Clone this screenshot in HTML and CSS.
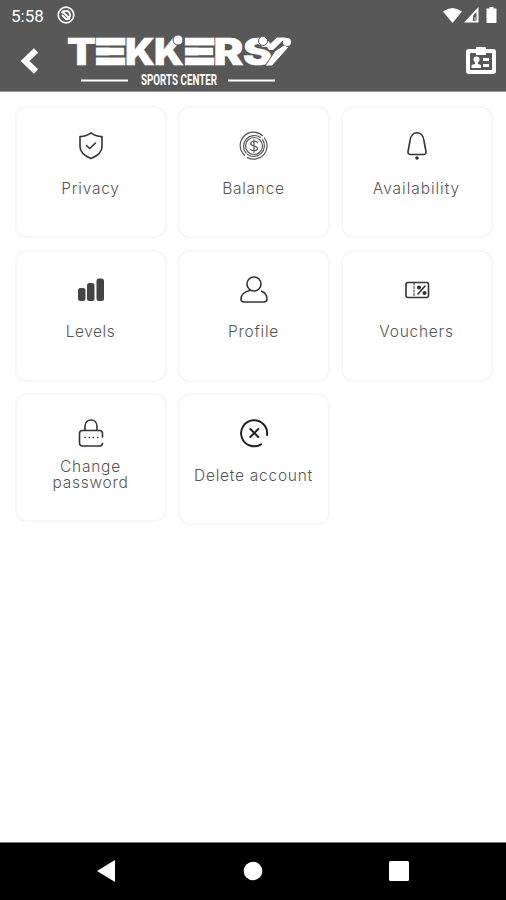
FILE: index.html
```html
<!DOCTYPE html>
<html lang="en">
<head>
<meta charset="utf-8">
<title>Tekkers Sports Center</title>
<link rel="stylesheet" href="styles.css">
</head>
<body>
<header class="top">
  <div class="status">
    <span class="time">5:58</span>
    <svg class="dnd" width="18" height="18" viewBox="0 0 18 18" fill="none" stroke="#fff"><circle cx="9" cy="9" r="7.8" stroke-width="1.7"/><path d="M4.500 7C7 4 12 4 13 8c1 3-2 6-5 5M5 5l8 8M5 9l4 4" stroke-width="1.800"/></svg>
    <svg class="signals" width="56" height="18" viewBox="0 0 56 18" fill="#fff"><path d="M0 4.500Q9.500-2.500 19 4.500L9.500 16Z"/><path d="M21 15.500 35.500 0V15.500Z"/><path d="M30 14V8.500L33.500 5V14Z" fill="#585858"/><path d="M32 10v4" stroke="#ddd" stroke-width="1"/><path d="M46.500 0h4v1.500h3V15q0 1-1 1h-8q-1 0-1-1V1.500h3Z"/></svg>
  </div>
  <div class="bar">
    <svg class="back" width="20" height="26" viewBox="0 0 20 26" fill="none" stroke="#fff" stroke-width="6"><path d="M16 2.500 5 13 16 23.500"/></svg>
    <svg class="logo" width="230" height="56" viewBox="0 0 230 56" fill="#fff">
      <g class="wordmark">
        <text x="1" y="32" textLength="29" lengthAdjust="spacingAndGlyphs">T</text>
        <text class="cut" x="29.500" y="31" textLength="30" lengthAdjust="spacingAndGlyphs">E</text>
        <text x="59" y="32" textLength="30" lengthAdjust="spacingAndGlyphs">K</text>
        <text x="88" y="32" textLength="30" lengthAdjust="spacingAndGlyphs">K</text>
        <text class="cut" x="118.500" y="31" textLength="30" lengthAdjust="spacingAndGlyphs">E</text>
        <text x="147.500" y="32" textLength="30" lengthAdjust="spacingAndGlyphs">R</text>
        <text x="177" y="32" textLength="29" lengthAdjust="spacingAndGlyphs">S</text>
      </g>
      <path d="M29 13.500h30M29 23.500h30M118 13.500h30M118 23.500h30" stroke="#585858" stroke-width="2"/>
      <circle cx="112" cy="7" r="5" stroke="#585858"/>
      <circle cx="197" cy="8" r="4.500" stroke="#585858"/>
      <path d="M201 14 211 4.500h9L207 17H203Z"/>
      <path d="M199 33 209 18 218 12 223 14 206 33Z" stroke="#585858"/>
      <circle cx="221" cy="9" r="4"/>
      <path d="M15 47.500h47M162 47.500h47" stroke="#fff" stroke-width="2"/>
      <text class="tagline" x="75" y="52" textLength="76" lengthAdjust="spacingAndGlyphs">SPORTS CENTER</text>
    </svg>
    <svg class="badge" width="30" height="28" viewBox="0 0 30 28"><path d="M10 2V1q0-1 1-1h8q1 0 1 1v1h7q3 0 3 3v19q0 3-3 3H3q-3 0-3-3V5q0-3 3-3Z" fill="#fff"/><path d="M4 6h6v2h10V6h6v17H4Z" fill="#585858"/><circle cx="10.500" cy="12.500" r="3" fill="#fff"/><path d="M9 15h3v2l3 1v3H5.500v-3L9 17ZM17 11h6v3h-6ZM17 17h6v3h-6Z" fill="#fff"/></svg>
  </div>
</header>
<main class="grid">
  <div class="card"><svg viewBox="0 0 28 28"><path d="M14 .8c3 2.300 7 3.500 11 3.800v9.900c0 6-6 10-11 12-5-2-11-6-11-12V4.600C7 4.300 11 3.100 14 .8ZM9.500 13.500l3.200 3 5.800-5.500"/></svg><span>Privacy</span></div>
  <div class="card"><svg viewBox="0 0 28 28" class="fine"><path d="M4.500 23.300A13.300 13.300 0 0 1 22.500 3.700M24.500 6a13.300 13.300 0 0 1-17 19.600M6 21A10.700 10.700 0 0 1 20.500 5.500M22.500 7.700A10.700 10.700 0 0 1 7.500 22.500M17.500 10.500C16.500 8.800 10.800 8.500 10.800 11.500c0 3 6.700 2 6.700 5 0 3-6 2.500-7 1M14 7.500v13"/><circle cx="14" cy="14" r="8.500"/></svg><span>Balance</span></div>
  <div class="card"><svg viewBox="0 0 28 28"><path d="M7 9C8-2 20-2 21 9l2 10.500q.5 3-3 3H8q-3.500 0-3-3Z"/><circle cx="14" cy="26" r="1" fill="#333"/></svg><span class="loose">Availability</span></div>
  <div class="card"><svg viewBox="0 0 28 28"><g class="solid"><rect x="1" y="12" width="7.500" height="13" rx="2.500"/><rect x="10" y="7" width="7.500" height="18" rx="2.500"/><rect x="19.500" y="2.500" width="7.500" height="22.500" rx="2.500"/></g></svg><span class="tight">Levels</span></div>
  <div class="card"><svg viewBox="0 0 28 28"><circle cx="14" cy="8" r="7"/><path d="M10 14.500C4.500 15.500 1 19 1 23q0 3 3 3h20q3 0 3-3c0-3.500-2-6.500-5.500-7.800"/></svg><span>Profile</span></div>
  <div class="card"><svg viewBox="0 0 28 28"><rect x="3" y="6.500" width="22.500" height="15" rx="2"/><path d="M11 7v14" stroke-dasharray="2 1.500" stroke-width="1"/><path d="m22 10-7 8"/><circle cx="16" cy="11.500" r="1.300" fill="#333"/><circle cx="21.500" cy="17" r="1.300" fill="#333"/></svg><span>Vouchers</span></div>
  <div class="card short"><svg viewBox="0 0 28 28"><path d="M8 11.500V7.500C8-1.200 20-1.200 20 7.500v4M25.500 18v-3.500q0-3-3-3h-17q-3 0-3 3v9q0 3.500 3 3.500h17q2.500 0 3-2.500"/><path d="M8 18.500h13.500" stroke-dasharray=".2 4" stroke-width="1.600"/></svg><span class="change">Change<br>password</span></div>
  <div class="card"><svg viewBox="0 0 28 28" class="bold"><path d="M21 25.300A13 13 0 1 1 27 16M10.300 10l8 8M18.300 10l-8 8"/></svg><span>Delete account</span></div>
</main>
<nav class="nav">
  <svg width="18" height="22" viewBox="0 0 18 22"><path d="M0 11 18 0v22Z"/></svg>
  <svg class="home" width="18" height="20" viewBox="0 0 18 20"><circle cx="9" cy="10" r="9.300"/></svg>
  <svg width="20" height="20" viewBox="0 0 20 20"><rect width="20" height="20" rx="1.500"/></svg>
</nav>
</body>
</html>
```

FILE: styles.css
```css
* { box-sizing: border-box; }
body { margin: 0; width: 506px; height: 900px; display: flex; flex-direction: column; background: #fefefe; font-family: "Inter", "Liberation Sans", sans-serif; overflow: hidden; }
svg { display: block; flex: none; overflow: visible; }
.top { height: 92px; flex: none; background: #585858; border-bottom: 1px solid #999; color: #fff; }
.status { height: 32px; display: flex; align-items: center; padding: 0 7px 0 11px; }
.dnd { margin-top: -2px; }
.time { width: 46px; font: 17px/20px Roboto, sans-serif; }
.signals { margin-left: auto; margin-top: -1px; }
.bar { display: flex; padding: 0 10px 0 20px; }
.back { margin-top: 16px; }
.logo { margin: 1px 0 0 26px; }
.wordmark { font: 900 36.500px Inter, sans-serif; stroke: #fff; stroke-width: 0.4; }
.wordmark .cut { font-size: 34px; stroke-width: 2.500; }
.tagline { font: 700 14.500px Roboto, sans-serif; }
.badge { margin: 15px 0 0 auto; }
.grid { flex: 1; display: grid; grid-template-columns: repeat(3, 152px); grid-auto-rows: 132px; gap: 11.500px 11px; align-content: start; padding: 14px 14px 0 14.500px; }
.card { display: flex; flex-direction: column; align-items: center; height: 132px; padding-top: 24px; border: 2px solid #f7f7f7; border-radius: 12px; background: #fff; color: #555; }
.short { height: 129px; }
.card svg { width: 28px; height: 28px; fill: none; stroke: #333; stroke-width: 1.600; stroke-linecap: round; stroke-linejoin: round; }
.card .fine { stroke: #555; stroke-width: 1.200; }
.card .bold { stroke: #222; stroke-width: 2; }
.card .solid { fill: #444; stroke: none; }
.card span { margin-top: 18.500px; font-size: 15.500px; line-height: 20px; font-weight: 300; letter-spacing: 0.750px; text-align: center; white-space: nowrap; }
.card .loose { letter-spacing: 0.950px; }
.card .tight { letter-spacing: 0.500px; }
.card .change { margin-top: 11.500px; line-height: 16px; }
.nav { height: 58px; flex: none; background: #000; border-top: 1px solid #777; display: flex; justify-content: space-between; align-items: center; padding: 0 97px 2px; fill: #fff; }
.home { margin-left: 2px; }
```
